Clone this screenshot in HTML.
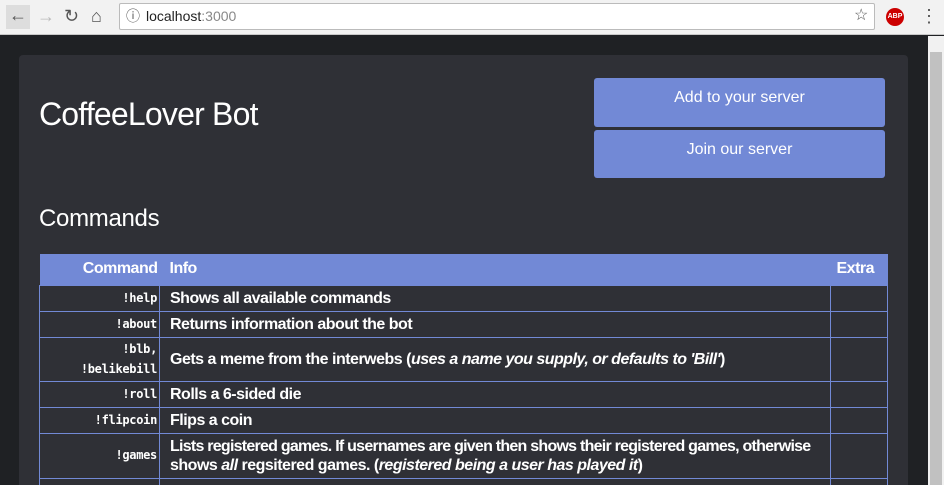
<!DOCTYPE html>
<html><head><style>
*{box-sizing:border-box;margin:0;padding:0}
html,body{width:944px;height:485px;overflow:hidden}
body{background:#1f2124;font-family:"Liberation Sans",sans-serif;position:relative}
.bar{position:absolute;left:0;top:0;width:944px;height:35px;background:#f2f2f2;border-bottom:1px solid #c8c8c8}
.url{position:absolute;left:119px;top:3px;width:756px;height:27px;background:#fff;border:1px solid #bbb;border-radius:2px;font-size:14px;line-height:25px;padding-left:26px;color:#222}
.url span{color:#888}
.ic{position:absolute;top:6px;font-size:18px;color:#555;line-height:20px}
.sb{position:absolute;left:928px;top:36px;width:16px;height:449px;background:#f1f1f1}
.sb div{position:absolute;left:2px;top:16px;width:12px;height:433px;background:#c1c1c1}
.card{position:absolute;left:19px;top:55px;width:889px;height:440px;background:#2f3036;border-radius:4px}
h1{position:absolute;left:39px;top:96px;font-size:32px;font-weight:normal;color:#fff;letter-spacing:-0.8px}
h2{position:absolute;left:39px;top:205px;font-size:24px;font-weight:normal;color:#fff;letter-spacing:-0.3px}
.btn{position:absolute;left:594px;width:291px;background:#7289d6;border-radius:3px;color:#fff;font-size:16px;text-align:center;padding-top:11px}
table{position:absolute;left:39px;top:254px;width:849px;border-collapse:collapse;color:#fff;font-size:16px;letter-spacing:-0.5px}
th{background:#7289d6;height:31px;font-weight:bold;text-align:left;padding:0 10px;font-size:16px}
td{border:1px solid #7289d6;padding:0 10px;height:26px;line-height:19px;font-weight:bold}
td.c{text-align:right;font-family:"DejaVu Sans Mono",monospace;font-size:12px;width:120px;padding-right:2px;letter-spacing:-0.3px}
td.x{width:57px}
i{font-style:italic}
</style></head><body>
<div class="bar">
<div class="ic" style="left:6px;background:#ddd;width:24px;height:24px;top:5px;text-align:center">&#8592;</div>
<div class="ic" style="left:37px;color:#bbb">&#8594;</div>
<div class="ic" style="left:64px">&#8635;</div>
<div class="ic" style="left:91px">&#8962;</div>
<div class="url"><span style="position:absolute;left:6px;color:#555">&#9432;</span>localhost<span>:3000</span></div>
<div class="ic" style="left:854px;font-size:16px">&#9734;</div>
<div style="position:absolute;left:886px;top:8px;width:18px;height:18px;border-radius:50%;background:#c00;color:#fff;font-size:7px;font-weight:bold;text-align:center;line-height:18px">ABP</div>
<div class="ic" style="left:920px">&#8942;</div>
</div>
<div class="sb"><div></div></div>
<div class="card"></div>
<h1>CoffeeLover Bot</h1>
<div class="btn" style="top:78px;height:49px">Add to your server</div>
<div class="btn" style="top:130px;height:48px">Join our server</div>
<h2>Commands</h2>
<table>
<tr><th style="text-align:right;padding-right:2px">Command</th><th>Info</th><th style="padding-left:6px">Extra</th></tr>
<tr><td class="c">!help</td><td>Shows all available commands</td><td class="x"></td></tr>
<tr><td class="c">!about</td><td>Returns information about the bot</td><td class="x"></td></tr>
<tr><td class="c" style="height:44px;line-height:20px">!blb,<br>!belikebill</td><td>Gets a meme from the interwebs (<i>uses a name you supply, or defaults to 'Bill'</i>)</td><td class="x"></td></tr>
<tr><td class="c">!roll</td><td>Rolls a 6-sided die</td><td class="x"></td></tr>
<tr><td class="c">!flipcoin</td><td>Flips a coin</td><td class="x"></td></tr>
<tr><td class="c" style="height:45px">!games</td><td><span style="white-space:nowrap;letter-spacing:-0.75px">Lists registered games. If usernames are given then shows their registered games, otherwise</span><br>shows <i>all</i> regsitered games. (<i>registered being a user has played it</i>)</td><td class="x"></td></tr>
<tr><td class="c">&nbsp;</td><td>&nbsp;</td><td class="x"></td></tr>
</table>
</body></html>
